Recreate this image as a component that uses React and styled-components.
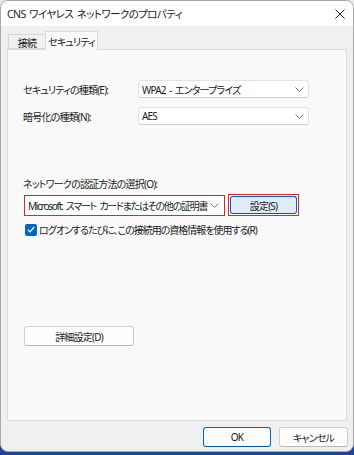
import React from "react";
import styled, { createGlobalStyle } from "styled-components";

const GlobalStyle = createGlobalStyle`
  html, body {
    margin: 0;
    padding: 0;
    width: 354px;
    height: 455px;
    overflow: hidden;
    background: linear-gradient(to bottom, #e9e9e9 0%, #e9e9e9 50%, #1d4597 50%, #1d4597 100%);
  }
  * { box-sizing: border-box; }
`;

const Window = styled.div`
  width: 354px;
  height: 452px;
  display: flex;
  flex-direction: column;
  background: #f0f0f0;
  border: 1px solid #a8a8a8;
  border-radius: 8px;
  overflow: hidden;
  font-family: "Noto Sans", "Noto Sans CJK JP", sans-serif;
  font-feature-settings: "palt";
  font-size: 10px;
  letter-spacing: -0.8px;
  word-spacing: 1.5px;
  color: #1a1a1a;
  white-space: nowrap;
`;

const TitleBar = styled.div`
  height: 25px;
  flex: none;
  background: #ffffff;
  display: flex;
  align-items: center;
  justify-content: space-between;
  padding: 0 8px 0 6px;
`;

const Title = styled.span`
  font-size: 10.5px;
  letter-spacing: -0.6px;
`;

const CloseIcon = () => (
  <svg width="10" height="10" viewBox="0 0 10 10">
    <path d="M0.5 0.5 L9.5 9.5 M9.5 0.5 L0.5 9.5" stroke="#1a1a1a" strokeWidth="1" fill="none" />
  </svg>
);

const Body = styled.div`
  flex: 1;
  display: flex;
  flex-direction: column;
  padding: 5px 6px 4px 6px;
`;

const TabStrip = styled.div`
  display: flex;
  align-items: flex-end;
  height: 18px;
  padding-left: 1px;
  position: relative;
  z-index: 1;
`;

const Tab = styled.div`
  height: ${(p) => (p.$active ? "19px" : "15px")};
  margin-bottom: ${(p) => (p.$active ? "-1px" : "0")};
  width: ${(p) => p.$w}px;
  display: flex;
  align-items: center;
  justify-content: center;
  padding-top: ${(p) => (p.$active ? "0" : "1px")};
  background: ${(p) => (p.$active ? "#f9f9f9" : "#f0f0f0")};
  border: 1px solid #d9d9d9;
  border-bottom: ${(p) => (p.$active ? "none" : "1px solid #d9d9d9")};
  margin-left: ${(p) => (p.$active ? "-1px" : "0")};
`;

const Panel = styled.div`
  flex: 1;
  background: #f9f9f9;
  border: 1px solid #dcdcdc;
  padding: 30px 15px 0 15px;
  display: flex;
  flex-direction: column;
`;

const FieldRow = styled.div`
  display: flex;
  align-items: center;
  margin-bottom: ${(p) => p.$gap || 0}px;
`;

const Label = styled.span`
  width: 115px;
  flex: none;
`;

const Select = styled.div`
  width: ${(p) => p.$w}px;
  height: ${(p) => p.$h || 18}px;
  background: #ffffff;
  border: 1px solid #e3e3e3;
  border-bottom-color: #d0d0d0;
  border-radius: 3px;
  display: flex;
  align-items: center;
  justify-content: space-between;
  padding: 0 4px 0 3px;
  overflow: hidden;
`;

const Chevron = () => (
  <svg width="9" height="5" viewBox="0 0 9 5" style={{ flex: "none" }}>
    <path d="M0.5 0.5 L4.5 4.5 L8.5 0.5" stroke="#7a7a7a" strokeWidth="1" fill="none" />
  </svg>
);

const SectionLabel = styled.div`
  margin-top: 51px;
  margin-bottom: 3px;
`;

const AuthRow = styled.div`
  display: flex;
  align-items: center;
  gap: 3px;
  margin-left: 1px;
`;

const RedBox = styled.div`
  border: 1px solid #e0232e;
  padding: ${(p) => p.$pad || 0}px;
  display: flex;
`;

const AuthSelect = styled(Select)`
  border: none;
  border-radius: 0;
  padding: 0 5px 0 3px;
  letter-spacing: -1.25px;
  word-spacing: 2px;
`;

const Button = styled.div`
  width: ${(p) => p.$w}px;
  height: ${(p) => p.$h || 20}px;
  display: flex;
  align-items: center;
  justify-content: center;
  border-radius: 3px;
  background: ${(p) => (p.$focus ? "#e1ecf8" : "#fdfdfd")};
  border: 1px solid ${(p) => (p.$primary ? "#0067c0" : "#d0d0d0")};
  border-bottom-color: ${(p) => (p.$primary ? "#005aa8" : "#b8b8b8")};
`;

const CheckRow = styled.div`
  display: flex;
  align-items: center;
  gap: 2px;
  margin-top: 6px;
  padding-left: 2px;
  letter-spacing: -1px;
`;

const CheckBox = styled.span`
  width: 12px;
  height: 12px;
  border-radius: 2px;
  background: #0067c0;
  display: flex;
  align-items: center;
  justify-content: center;
  flex: none;
`;

const AdvancedWrap = styled.div`
  margin-top: 89px;
  padding-left: 1px;
`;

const Footer = styled.div`
  display: flex;
  justify-content: flex-end;
  gap: 8px;
  padding: 6px 0 0 0;
  margin-right: -1px;
`;

export default function App() {
  return (
    <>
      <GlobalStyle />
      <Window>
        <TitleBar>
          <Title>CNS ワイヤレス ネットワークのプロパティ</Title>
          <CloseIcon />
        </TitleBar>
        <Body>
          <TabStrip>
            <Tab $w={38}>接続</Tab>
            <Tab $w={53} $active>セキュリティ</Tab>
          </TabStrip>
          <Panel>
            <FieldRow $gap={9}>
              <Label>セキュリティの種類(E):</Label>
              <Select $w={171}>
                <span>WPA2 - エンタープライズ</span>
                <Chevron />
              </Select>
            </FieldRow>
            <FieldRow>
              <Label>暗号化の種類(N):</Label>
              <Select $w={171}>
                <span>AES</span>
                <Chevron />
              </Select>
            </FieldRow>
            <SectionLabel>ネットワークの認証方法の選択(O):</SectionLabel>
            <AuthRow>
              <RedBox>
                <AuthSelect $w={199} $h={19}>
                  <span>Microsoft: スマート カードまたはその他の証明書</span>
                  <Chevron />
                </AuthSelect>
              </RedBox>
              <RedBox $pad={1}>
                <Button $w={67} $h={18} $primary $focus>設定(S)</Button>
              </RedBox>
            </AuthRow>
            <CheckRow>
              <CheckBox>
                <svg width="8" height="7" viewBox="0 0 8 7">
                  <path d="M0.8 3.6 L3 5.8 L7.2 1" stroke="#ffffff" strokeWidth="1.2" fill="none" />
                </svg>
              </CheckBox>
              <span>ログオンするたびに、この接続用の資格情報を使用する(R)</span>
            </CheckRow>
            <AdvancedWrap>
              <Button $w={110}>詳細設定(D)</Button>
            </AdvancedWrap>
          </Panel>
          <Footer>
            <Button $w={68} $primary>OK</Button>
            <Button $w={69}>キャンセル</Button>
          </Footer>
        </Body>
      </Window>
    </>
  );
}
